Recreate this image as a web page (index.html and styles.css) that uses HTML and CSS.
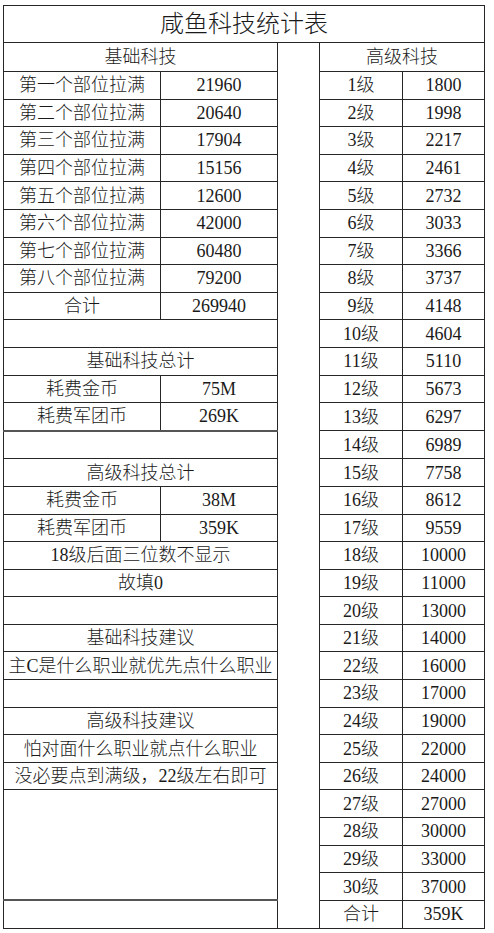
FILE: index.html
```html
<!DOCTYPE html>
<html lang="zh-CN">
<head>
<meta charset="utf-8">
<title>咸鱼科技统计表</title>
<link rel="stylesheet" href="styles.css">
</head>
<body>
<table class="sheet">
  <colgroup>
    <col class="c-name"><col class="c-val"><col class="c-gap"><col class="c-lv"><col class="c-cost">
  </colgroup>
  <tr class="r-title"><td colspan="5" class="title">咸鱼科技统计表</td></tr>
  <tr class="r-head"><td colspan="2">基础科技</td><td rowspan="32" class="gap"></td><td colspan="2">高级科技</td></tr>
  <tr><td>第一个部位拉满</td><td>21960</td><td>1级</td><td>1800</td></tr>
  <tr><td>第二个部位拉满</td><td>20640</td><td>2级</td><td>1998</td></tr>
  <tr><td>第三个部位拉满</td><td>17904</td><td>3级</td><td>2217</td></tr>
  <tr><td>第四个部位拉满</td><td>15156</td><td>4级</td><td>2461</td></tr>
  <tr><td>第五个部位拉满</td><td>12600</td><td>5级</td><td>2732</td></tr>
  <tr><td>第六个部位拉满</td><td>42000</td><td>6级</td><td>3033</td></tr>
  <tr><td>第七个部位拉满</td><td>60480</td><td>7级</td><td>3366</td></tr>
  <tr><td>第八个部位拉满</td><td>79200</td><td>8级</td><td>3737</td></tr>
  <tr><td>合计</td><td>269940</td><td>9级</td><td>4148</td></tr>
  <tr><td colspan="2"></td><td>10级</td><td>4604</td></tr>
  <tr><td colspan="2">基础科技总计</td><td>11级</td><td>5110</td></tr>
  <tr><td>耗费金币</td><td>75M</td><td>12级</td><td>5673</td></tr>
  <tr><td class="thick">耗费军团币</td><td class="thick">269K</td><td>13级</td><td>6297</td></tr>
  <tr><td colspan="2"></td><td>14级</td><td>6989</td></tr>
  <tr><td colspan="2">高级科技总计</td><td>15级</td><td>7758</td></tr>
  <tr><td>耗费金币</td><td>38M</td><td>16级</td><td>8612</td></tr>
  <tr><td>耗费军团币</td><td>359K</td><td>17级</td><td>9559</td></tr>
  <tr><td colspan="2">18级后面三位数不显示</td><td>18级</td><td>10000</td></tr>
  <tr><td colspan="2">故填0</td><td>19级</td><td>11000</td></tr>
  <tr><td colspan="2"></td><td>20级</td><td>13000</td></tr>
  <tr><td colspan="2">基础科技建议</td><td>21级</td><td>14000</td></tr>
  <tr><td colspan="2">主C是什么职业就优先点什么职业</td><td>22级</td><td>16000</td></tr>
  <tr><td colspan="2"></td><td>23级</td><td>17000</td></tr>
  <tr><td colspan="2">高级科技建议</td><td>24级</td><td>19000</td></tr>
  <tr><td colspan="2">怕对面什么职业就点什么职业</td><td>25级</td><td>22000</td></tr>
  <tr><td colspan="2">没必要点到满级，22级左右即可</td><td>26级</td><td>24000</td></tr>
  <tr><td colspan="2" rowspan="4" class="thick"></td><td>27级</td><td>27000</td></tr>
  <tr><td>28级</td><td>30000</td></tr>
  <tr><td>29级</td><td>33000</td></tr>
  <tr><td>30级</td><td>37000</td></tr>
  <tr><td colspan="2"></td><td>合计</td><td>359K</td></tr>
</table>
</body>
</html>
```
FILE: styles.css
```css
html, body {
  margin: 0;
  padding: 0;
  background: #ffffff;
}
body {
  padding: 5px 0 0 3px;
  font-family: "Liberation Serif", "Noto Sans CJK SC", serif;
  color: #1a1a1a;
}
.sheet {
  border-collapse: collapse;
  table-layout: fixed;
  width: 481px;
}
.c-name { width: 157px; }
.c-val { width: 117px; }
.c-gap { width: 42px; }
.c-lv { width: 83px; }
.c-cost { width: 82px; }
.sheet td {
  border: 1px solid #262626;
  padding: 0;
  height: 26.6px;
  text-align: center;
  vertical-align: middle;
  font-size: 18px;
  line-height: 20px;
  white-space: nowrap;
  font-weight: 300;
}
.sheet td.thick {
  border-bottom: 2px solid #555555;
}
.sheet .r-title td {
  height: 36px;
  font-size: 24px;
  line-height: 28px;
}
.sheet .r-head td {
  height: 28px;
}
.sheet td.gap {
  height: auto;
}
```
